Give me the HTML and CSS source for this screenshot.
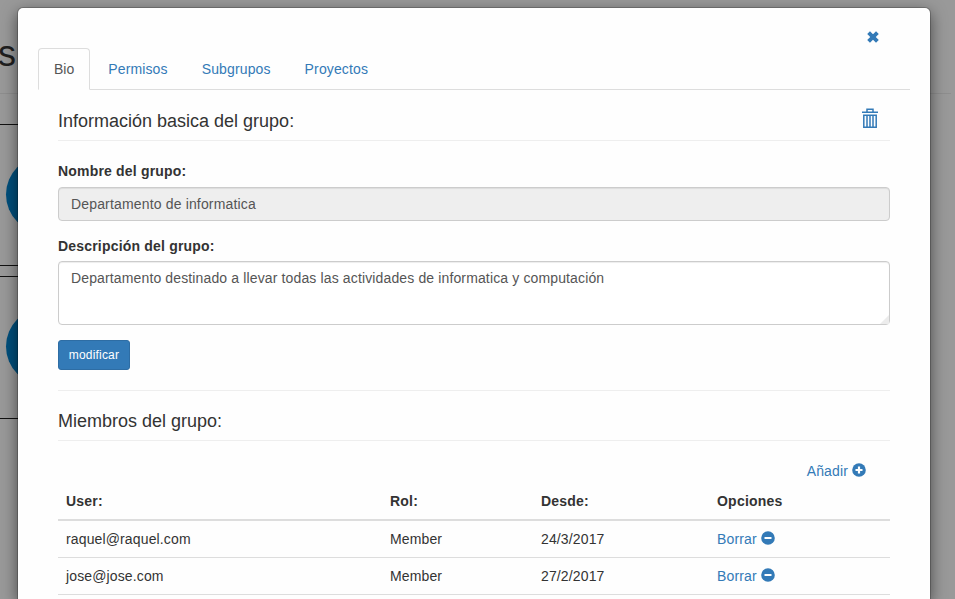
FILE: index.html
```html
<!DOCTYPE html>
<html lang="es">
<head>
<meta charset="utf-8">
<title>Grupo</title>
<link rel="stylesheet" href="styles.css">
</head>
<body>
<div class="page">
  <h1 class="page-title">s</h1>
  <div class="panel"><span class="avatar"></span></div>
  <div class="panel"><span class="avatar"></span></div>
</div>
<div class="modal">
  <div class="modal-head">
    <a class="close"><svg width="14" height="14" viewBox="0 0 14 14"><path d="M2.6 2.6 11.4 11.4M11.4 2.6 2.6 11.4" fill="none" stroke="currentColor" stroke-width="3.9"/></svg></a>
  </div>
  <nav class="tabs">
    <a class="tab active">Bio</a>
    <a class="tab">Permisos</a>
    <a class="tab">Subgrupos</a>
    <a class="tab">Proyectos</a>
  </nav>
  <div class="content">
    <div class="section-head first">
      <h4>Información basica del grupo:</h4>
      <a class="trash"><svg width="16" height="20" viewBox="0 0 16 20"><path d="M0 4.3h16M5 4V1.2h6V4" fill="none" stroke="currentColor" stroke-width="1.5"/><path d="M1.8 7.2h12.4v12H1.8zM5 7v12M8 7v12M11 7v12" fill="none" stroke="currentColor" stroke-width="1.5"/></svg></a>
    </div>
    <label class="label-name">Nombre del grupo:</label>
    <div class="control readonly">Departamento de informatica</div>
    <label class="label-desc">Descripción del grupo:</label>
    <div class="control area">Departamento destinado a llevar todas las actividades de informatica y computación<svg class="grip" width="9" height="9" viewBox="0 0 9 9"><path d="M9 0v9H0z" fill="#ececec"/></svg></div>
    <button class="btn">modificar</button>
    <hr>
    <div class="section-head members"><h4>Miembros del grupo:</h4></div>
    <div class="add"><a>Añadir <svg class="icon" width="14" height="14" viewBox="0 0 14 14"><circle cx="7" cy="7" r="6.8" fill="currentColor"/><path d="M7 3.5v7M3.5 7h7" stroke="#fff" stroke-width="2.2"/></svg></a></div>
    <table>
      <colgroup><col class="c-user"><col class="c-role"><col class="c-date"><col class="c-opt"></colgroup>
      <thead><tr><th>User:</th><th>Rol:</th><th>Desde:</th><th>Opciones</th></tr></thead>
      <tbody>
        <tr><td>raquel@raquel.com</td><td>Member</td><td>24/3/2017</td><td><a>Borrar <svg class="icon" width="14" height="14" viewBox="0 0 14 14"><circle cx="7" cy="7" r="6.8" fill="currentColor"/><path d="M3.5 7h7" stroke="#fff" stroke-width="2"/></svg></a></td></tr>
        <tr><td>jose@jose.com</td><td>Member</td><td>27/2/2017</td><td><a>Borrar <svg class="icon" width="14" height="14" viewBox="0 0 14 14"><circle cx="7" cy="7" r="6.8" fill="currentColor"/><path d="M3.5 7h7" stroke="#fff" stroke-width="2"/></svg></a></td></tr>
      </tbody>
    </table>
  </div>
</div>
</body>
</html>
```
FILE: styles.css
```css
* { box-sizing: border-box; }
html, body { height: 100%; }
body {
  margin: 0;
  overflow: hidden;
  position: relative;
  background: #999;
  color: #333;
  font: 14px/20px "Liberation Sans", Arial, sans-serif;
  letter-spacing: .135px;
}
a { color: #337ab7; text-decoration: none; }
svg { display: block; }

.page { padding-top: 34px; }
.page-title {
  width: 951px;
  height: 60px;
  margin: 0 0 30px;
  border-bottom: 1px solid #8e8e8e;
  color: #1f1f1f;
  font-size: 36px;
  font-weight: 400;
  line-height: 40px;
  text-indent: -2px;
}
.panel {
  width: 900px;
  height: 142px;
  margin-bottom: 10px;
  padding: 31px 0 0 6px;
  border: solid #111;
  border-width: 1px 0;
}
.panel + .panel { height: 143px; }
.avatar {
  display: block;
  width: 77px;
  height: 77px;
  border-radius: 50%;
  background: #004f7c;
}

.modal {
  position: absolute;
  top: 7px;
  left: 17px;
  width: 914px;
  height: 592px;
  padding: 0 20px;
  border: 1px solid rgba(0, 0, 0, .2);
  border-bottom: 0;
  border-radius: 6px 6px 0 0;
  background: #fefefe;
  background-clip: padding-box;
  box-shadow: 0 5px 15px rgba(0, 0, 0, .5);
}
.modal-head {
  display: flex;
  justify-content: flex-end;
  height: 40px;
  padding: 22px 30px 0 0;
}
.tabs {
  display: flex;
  gap: 2px;
  height: 42px;
  border-bottom: 1px solid #ddd;
}
.tab {
  height: 42px;
  padding: 10px 15px;
  border: 1px solid transparent;
  border-radius: 4px 4px 0 0;
}
.tab.active {
  border-color: #ddd;
  border-bottom-color: #fefefe;
  background: #fefefe;
  color: #555;
  letter-spacing: 0;
}

.content { padding: 0 20px; }
.section-head {
  display: flex;
  justify-content: space-between;
  height: 50px;
  padding-top: 20px;
  border-bottom: 1px solid #eee;
}
.section-head.first { height: 51px; padding-top: 21px; }
h4 { margin: 0; font-size: 18px; font-weight: 400; line-height: 20px; letter-spacing: 0; }
.trash { margin: -3px 12px 0 0; }
label { display: block; font-weight: 700; letter-spacing: .19px; }
.label-name { margin: 20px 0 6px; }
.label-desc { margin: 15px 0 5px; }
.control {
  height: 34px;
  padding: 6px 12px;
  border: 1px solid #ccc;
  border-radius: 4px;
  background: #fff;
  color: #555;
  box-shadow: inset 0 1px 1px rgba(0, 0, 0, .075);
}
.control.readonly { background: #eee; letter-spacing: .16px; }
.control.area { position: relative; height: 64px; }
.grip { position: absolute; right: 0; bottom: 0; }
.btn {
  display: block;
  width: 72px;
  height: 30px;
  margin-top: 15px;
  padding: 0;
  border: 1px solid #2e6da4;
  border-radius: 3px;
  background: #337ab7;
  color: #fff;
  font: 12px/18px "Liberation Sans", Arial, sans-serif;
  letter-spacing: .18px;
}
hr { height: 1px; margin: 20px 0 0; border: 0; background: #eee; }
.add { padding: 20px 24px 2px 0; text-align: right; }
.icon { display: inline-block; vertical-align: -1px; }
table { width: 832px; border-collapse: separate; border-spacing: 0; table-layout: fixed; }
.c-user { width: 324px; }
.c-role { width: 151px; }
.c-date { width: 176px; }
.c-opt { width: 181px; }
th, td { height: 37px; padding: 8px; border-bottom: 1px solid #ddd; text-align: left; }
th { height: 38px; border-bottom-width: 2px; letter-spacing: .22px; }
```
